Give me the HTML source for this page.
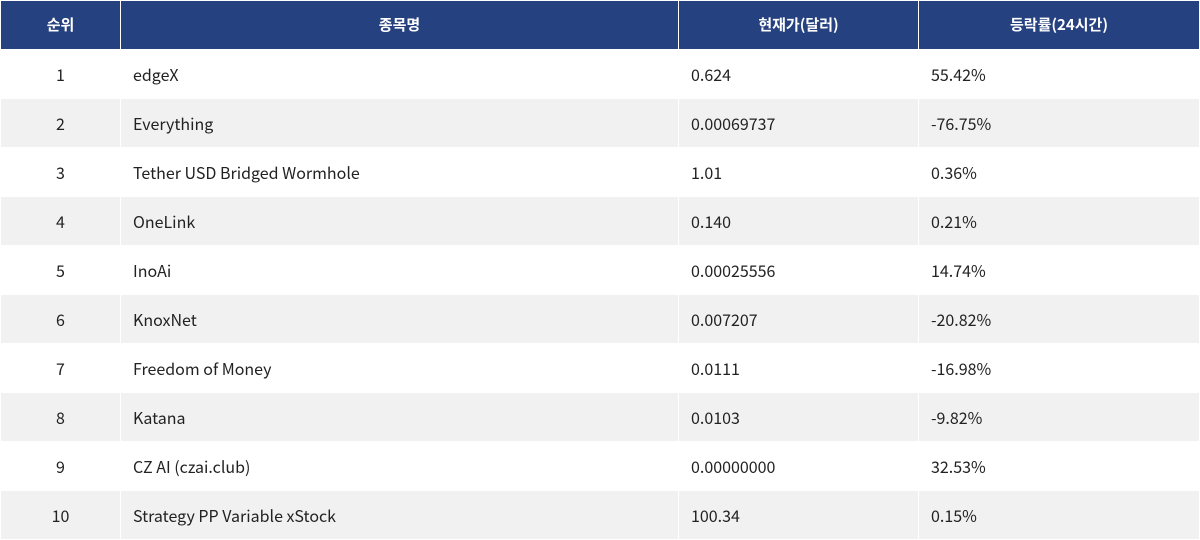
<!DOCTYPE html>
<html><head><meta charset="utf-8"><style>
body{margin:0;width:1200px;height:540px;background:#fff;overflow:hidden;font-family:"Noto Sans CJK KR","Liberation Sans",sans-serif;}
.r{position:absolute;left:0;width:1200px;height:48px;}
.c{position:absolute;top:0;height:48px;line-height:48px;font-size:16px;color:#222;box-sizing:border-box;}
.c1{left:1px;width:119px;text-align:center}
.c2{left:121px;width:557px;padding-left:12px}
.c3{left:679px;width:239px;padding-left:12px}
.c4{left:919px;width:280px;padding-left:12px}
.h .c{background:#26417f;color:#fff;font-weight:bold;font-size:15px;text-align:center;padding-left:0;line-height:48px}
.w .c{background:#fff}
.g .c{background:#f1f1f1}
</style></head><body>
<div class="r h" style="top:1px"><div class="c c1">순위</div><div class="c c2">종목명</div><div class="c c3">현재가(달러)</div><div class="c c4">등락률(24시간)</div></div>
<div class="r w" style="top:50px"><div class="c c1">1</div><div class="c c2">edgeX</div><div class="c c3">0.624</div><div class="c c4">55.42%</div></div>
<div class="r g" style="top:99px"><div class="c c1">2</div><div class="c c2">Everything</div><div class="c c3">0.00069737</div><div class="c c4">-76.75%</div></div>
<div class="r w" style="top:148px"><div class="c c1">3</div><div class="c c2">Tether USD Bridged Wormhole</div><div class="c c3">1.01</div><div class="c c4">0.36%</div></div>
<div class="r g" style="top:197px"><div class="c c1">4</div><div class="c c2">OneLink</div><div class="c c3">0.140</div><div class="c c4">0.21%</div></div>
<div class="r w" style="top:246px"><div class="c c1">5</div><div class="c c2">InoAi</div><div class="c c3">0.00025556</div><div class="c c4">14.74%</div></div>
<div class="r g" style="top:295px"><div class="c c1">6</div><div class="c c2">KnoxNet</div><div class="c c3">0.007207</div><div class="c c4">-20.82%</div></div>
<div class="r w" style="top:344px"><div class="c c1">7</div><div class="c c2">Freedom of Money</div><div class="c c3">0.0111</div><div class="c c4">-16.98%</div></div>
<div class="r g" style="top:393px"><div class="c c1">8</div><div class="c c2">Katana</div><div class="c c3">0.0103</div><div class="c c4">-9.82%</div></div>
<div class="r w" style="top:442px"><div class="c c1">9</div><div class="c c2">CZ AI (czai.club)</div><div class="c c3">0.00000000</div><div class="c c4">32.53%</div></div>
<div class="r g" style="top:491px"><div class="c c1">10</div><div class="c c2">Strategy PP Variable xStock</div><div class="c c3">100.34</div><div class="c c4">0.15%</div></div>
</body></html>
